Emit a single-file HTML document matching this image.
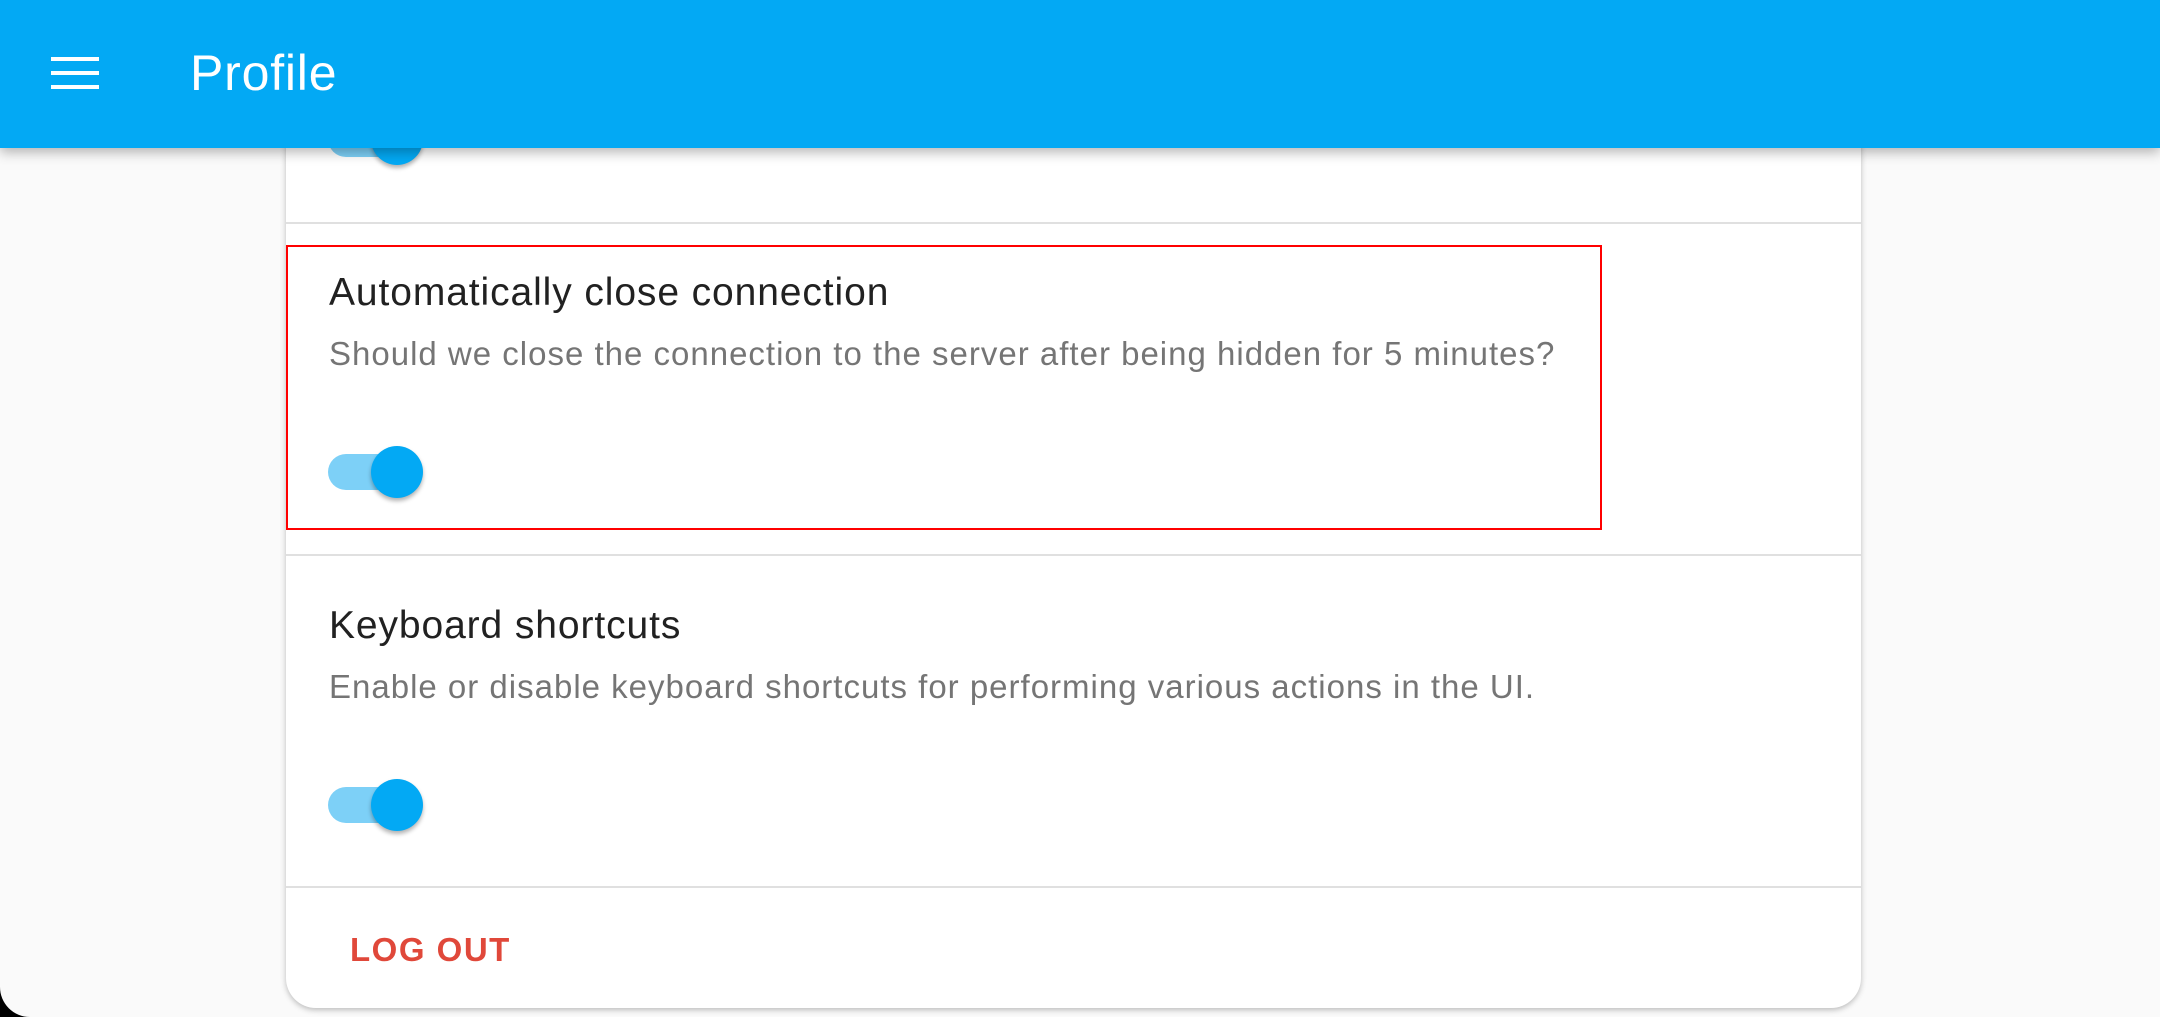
<!DOCTYPE html>
<html><head><meta charset="utf-8"><style>
html,body{margin:0;padding:0;width:2160px;height:1017px;overflow:hidden;background:#fafafa;font-family:"Liberation Sans",sans-serif;}
.card{position:absolute;left:286px;top:60px;width:1575px;height:948px;background:#fff;border-radius:0 0 30px 30px;box-shadow:0 2px 6px rgba(0,0,0,.25);}
.hdr{position:absolute;left:0;top:0;width:2160px;height:148px;background:#03a9f4;box-shadow:0 4px 12px rgba(0,0,0,.3);z-index:5;}
.hl{position:absolute;left:51px;width:48px;height:4px;background:#fff;}
.ptitle{position:absolute;left:190px;top:48px;font-size:50px;line-height:50px;color:#fff;letter-spacing:0.8px;}
.div{position:absolute;left:286px;width:1575px;height:2px;background:#e0e0e0;}
.t{position:absolute;left:329px;font-size:39px;line-height:39px;color:#212121;white-space:nowrap;letter-spacing:0.9px;}
.s{position:absolute;left:329px;font-size:33px;line-height:33px;color:#757575;white-space:nowrap;letter-spacing:1px;}
.trk{position:absolute;left:328px;width:86px;height:36px;border-radius:18px;background:#7dd0f7;}
.th{position:absolute;width:52px;height:52px;border-radius:50%;background:#03a9f4;box-shadow:0 3px 4px rgba(0,0,0,.3);}
.red{position:absolute;left:286px;top:245px;width:1312px;height:281px;border:2px solid #f00;}
.lo{position:absolute;left:350px;top:933px;font-size:33px;line-height:34px;color:#e0483a;font-weight:bold;letter-spacing:1.5px;}
.corner{position:absolute;left:0;top:987px;width:30px;height:30px;background:#000;}
.cornerIn{position:absolute;left:0;top:957px;width:80px;height:60px;background:#fafafa;border-bottom-left-radius:30px;}
</style></head><body>
<div class="corner"></div><div class="cornerIn"></div>
<div class="card"></div>
<div class="trk" style="top:121px"></div><div class="th" style="left:371px;top:113px"></div>
<div class="div" style="top:222px"></div>
<div class="red"></div>
<div class="t" style="top:273px">Automatically close connection</div>
<div class="s" style="top:337px">Should we close the connection to the server after being hidden for 5 minutes?</div>
<div class="trk" style="top:454px"></div><div class="th" style="left:371px;top:446px"></div>
<div class="div" style="top:554px"></div>
<div class="t" style="top:606px">Keyboard shortcuts</div>
<div class="s" style="top:670px">Enable or disable keyboard shortcuts for performing various actions in the UI.</div>
<div class="trk" style="top:787px"></div><div class="th" style="left:371px;top:779px"></div>
<div class="div" style="top:886px"></div>
<div class="lo">LOG OUT</div>
<div class="hdr">
<div class="hl" style="top:57px"></div><div class="hl" style="top:71px"></div><div class="hl" style="top:85px"></div>
<div class="ptitle">Profile</div>
</div>
</body></html>
